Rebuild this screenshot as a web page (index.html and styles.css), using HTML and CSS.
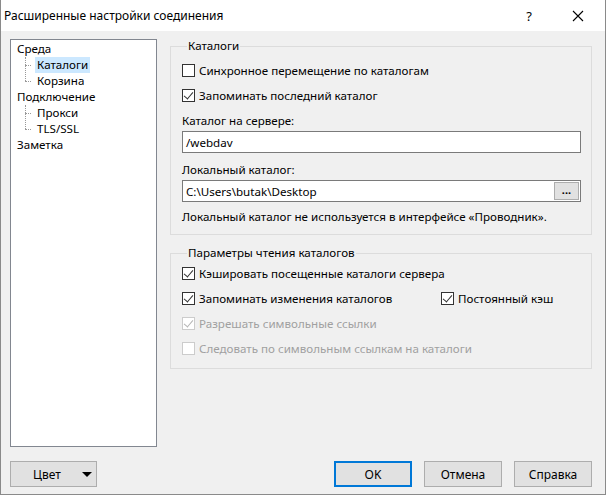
FILE: index.html
```html
<!DOCTYPE html>
<html lang="ru">
<head>
<meta charset="utf-8">
<title>Расширенные настройки соединения</title>
<link rel="stylesheet" href="styles.css">
</head>
<body>
<div class="window">
  <div class="titlebar">
    <span class="title">Расширенные настройки соединения</span>
    <span class="help">?</span>
    <span class="close"><svg width="12" height="12" viewBox="0 0 12 12"><path d="M1 1L11 11M11 1L1 11" stroke="#000" stroke-width="1.1" fill="none"/></svg></span>
  </div>
  <div class="body">
    <div class="main">
      <div class="tree">
        <div class="node">Среда</div>
        <div class="children">
          <div class="node child sel"><span class="lbl">Каталоги</span></div>
          <div class="node child last"><span class="lbl">Корзина</span></div>
        </div>
        <div class="node">Подключение</div>
        <div class="children">
          <div class="node child"><span class="lbl">Прокси</span></div>
          <div class="node child last"><span class="lbl">TLS/SSL</span></div>
        </div>
        <div class="node">Заметка</div>
      </div>
      <div class="panel">
        <fieldset class="group g1">
          <legend>Каталоги</legend>
          <label class="chk"><span class="box"></span>Синхронное перемещение по каталогам</label>
          <label class="chk"><span class="box on"></span>Запоминать последний каталог</label>
          <div class="caption">Каталог на сервере:</div>
          <div class="edit">/webdav</div>
          <div class="caption">Локальный каталог:</div>
          <div class="edit">C:\Users\butak\Desktop<span class="browse">...</span></div>
          <div class="note">Локальный каталог не используется в интерфейсе «Проводник».</div>
        </fieldset>
        <fieldset class="group g2">
          <legend>Параметры чтения каталогов</legend>
          <label class="chk"><span class="box on"></span>Кэшировать посещенные каталоги сервера</label>
          <div class="row">
            <label class="chk first"><span class="box on"></span>Запоминать изменения каталогов</label>
            <label class="chk"><span class="box on"></span>Постоянный кэш</label>
          </div>
          <label class="chk dis"><span class="box on"></span>Разрешать символьные ссылки</label>
          <label class="chk dis"><span class="box"></span>Следовать по символьным ссылкам на каталоги</label>
        </fieldset>
      </div>
    </div>
    <div class="footer">
      <button class="btn color">Цвет<span class="arrow"></span></button>
      <span class="spacer"></span>
      <button class="btn ok">OK</button>
      <button class="btn">Отмена</button>
      <button class="btn">Справка</button>
    </div>
  </div>
</div>
</body>
</html>
```

FILE: styles.css
```css
* { box-sizing: border-box; }
html, body { margin: 0; padding: 0; }
body {
  font-family: "Noto Sans", "Liberation Sans", sans-serif;
  font-size: 11.6px;
  color: #000;
  background: #fff;
}
.window {
  width: 606px;
  height: 495px;
  border: 1px solid #8a8a8a;
  border-top: none;
  background: #f0f0f0;
  display: flex;
  flex-direction: column;
}
.titlebar {
  height: 31px;
  background: #fff;
  display: flex;
  align-items: center;
  padding-left: 3px;
  flex: none;
}
.title { font-size: 12px; flex: 1; }
.help { width: 20px; margin-right: 33px; text-align: center; font-size: 13px; }
.close { width: 12px; height: 12px; margin-right: 21px; display: flex; }
.body {
  flex: 1;
  display: flex;
  flex-direction: column;
  padding: 8px 13px 7px 9px;
}
.main { flex: 1; display: flex; gap: 13px; }
.tree {
  flex: none;
  width: 147px;
  height: 408px;
  background: #fff;
  border: 1px solid #828790;
  padding: 1px 0 0 6px;
  line-height: 16px;
}
.node { height: 16px; white-space: nowrap; }
.children {
  margin-left: 8px;
  position: relative;
}
.children::before {
  content: "";
  position: absolute;
  left: 0;
  top: 0;
  height: 24px;
  border-left: 1px dotted #999;
}
.child { position: relative; padding-left: 10px; }
.child::before {
  content: "";
  position: absolute;
  left: 0;
  top: 8px;
  width: 6px;
  border-top: 1px dotted #999;
}
.lbl { padding: 0 2px; display: inline-block; }
.sel .lbl { background: #cce8ff; }
.panel { flex: 1; min-width: 0; display: flex; flex-direction: column; gap: 11px; }
.group {
  margin: 0;
  border: 1px solid #dcdcdc;
  padding: 0 10px 0 11px;
  min-width: 0;
}
.group legend {
  padding: 0 1px;
  margin-left: 5px;
  line-height: 14px;
}
.g1 { height: 196px; padding-top: 5px; }
.g2 { height: 123px; padding-top: 1px; }
.chk {
  display: flex;
  align-items: center;
  height: 25px;
  white-space: nowrap;
}
.box {
  width: 13px;
  height: 13px;
  border: 1px solid #333;
  background: #fff;
  margin-right: 4px;
  flex: none;
  position: relative;
}
.box.on::after {
  content: "";
  position: absolute;
  left: 3px;
  top: 0px;
  width: 4px;
  height: 8px;
  border: solid #333;
  border-width: 0 1px 1px 0;
  transform: rotate(40deg);
}
.dis { color: #a0a0a0; }
.dis .box { border-color: #cccccc; }
.dis .box.on::after { border-color: #b5b5b5; }
.row { display: flex; }
.row .first { width: 259px; flex: none; }
.caption { height: 16px; line-height: 16px; margin-top: 5px; margin-bottom: 2px; }
.edit + .caption { margin-top: 9px; }
.edit {
  width: 399px;
  height: 22px;
  border: 1px solid #7a7a7a;
  background: #fff;
  padding-left: 3px;
  display: flex;
  align-items: center;
  justify-content: space-between;
}
.browse {
  width: 25px;
  height: 18px;
  margin-right: 1px;
  background: #e1e1e1;
  border: 1px solid #adadad;
  font-size: 11px;
  line-height: 14px;
  text-align: center;
  font-weight: bold;
}
.note { margin-top: 8px; line-height: 14px; }
.footer {
  display: flex;
  align-items: center;
  height: 26px;
  margin-top: 14px;
}
.spacer { flex: 1; }
.btn {
  font-family: inherit;
  font-size: 12px;
  height: 26px;
  width: 78px;
  background: #e1e1e1;
  border: 1px solid #adadad;
  padding: 0;
  margin-left: 12px;
  color: #000;
}
.btn.ok { border: 2px solid #0078d7; margin-left: 0; }
.btn.color {
  width: 87px;
  margin-left: 0;
  display: flex;
  align-items: center;
  padding-left: 22px;
}
.arrow {
  margin-left: auto;
  margin-right: 4px;
  width: 0; height: 0;
  border-left: 5px solid transparent;
  border-right: 5px solid transparent;
  border-top: 5px solid #000;
}
```
